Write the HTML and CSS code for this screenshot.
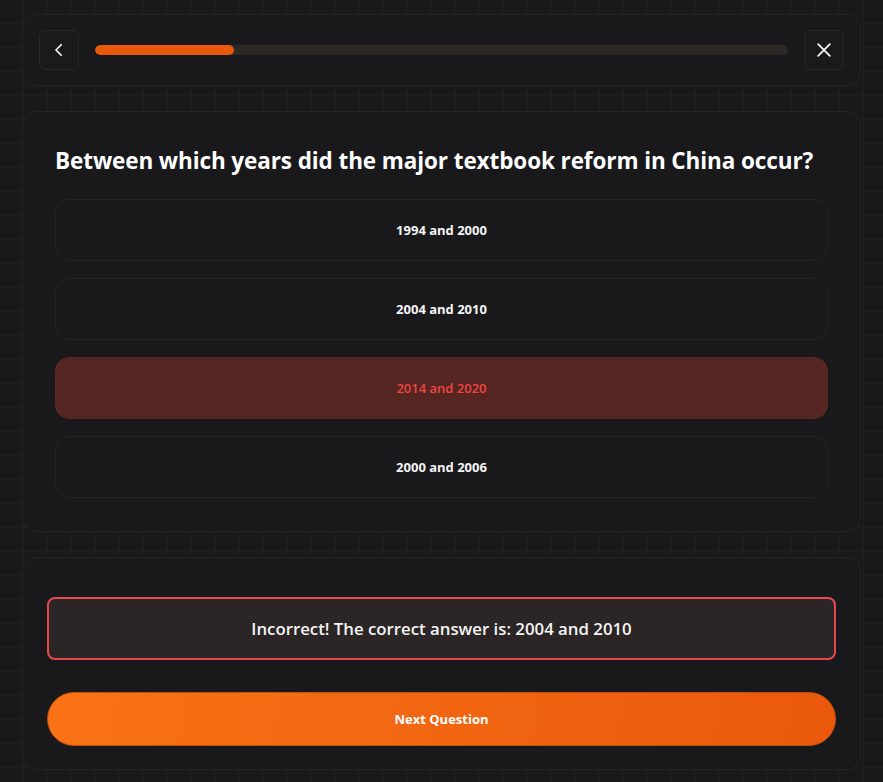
FILE: index.html
```html
<!DOCTYPE html>
<html lang="en">
<head>
<meta charset="utf-8">
<title>Quiz</title>
<link rel="stylesheet" href="styles.css">
</head>
<body>
<main class="page">
  <header class="card topbar">
    <button class="icon-btn" aria-label="Back">
      <svg width="18" height="18" viewBox="0 0 24 24" fill="none" stroke="#ffffff" stroke-width="2.2" stroke-linecap="round" stroke-linejoin="round"><path d="M15 5l-7 7 7 7"/></svg>
    </button>
    <div class="progress"><div class="progress-fill" style="width:20%"></div></div>
    <button class="icon-btn" aria-label="Close">
      <svg width="20" height="20" viewBox="0 0 24 24" fill="none" stroke="#ffffff" stroke-width="2" stroke-linecap="round"><path d="M5 5l14 14M19 5L5 19"/></svg>
    </button>
  </header>

  <section class="card question-card">
    <h1 class="question">Between which years did the major textbook reform in China occur?</h1>
    <div class="options">
      <button class="option">1994 and 2000</button>
      <button class="option">2004 and 2010</button>
      <button class="option option-wrong">2014 and 2020</button>
      <button class="option">2000 and 2006</button>
    </div>
  </section>

  <section class="card feedback-card">
    <div class="feedback">Incorrect! The correct answer is: 2004 and 2010</div>
    <button class="next-btn">Next Question</button>
  </section>
</main>
</body>
</html>
```

FILE: styles.css
```css
* { box-sizing: border-box; }

html, body {
  margin: 0;
  padding: 0;
}

body {
  background-color: #19191b;
  background-image:
    linear-gradient(to right, #1f1f22 1px, transparent 1px),
    linear-gradient(to bottom, #1f1f22 1px, transparent 1px);
  background-size: 24px 24px;
  background-position: -1px -1px;
  font-family: "Open Sans", "Noto Sans", "Liberation Sans", sans-serif;
  color: #ffffff;
  min-height: 782px;
}

.page {
  padding: 14px 22px 12px;
  display: flex;
  flex-direction: column;
  gap: 25px;
}

.card {
  background: #19191b;
  border: 1px solid #232326;
  border-radius: 14px;
}

.topbar {
  display: flex;
  align-items: center;
  gap: 16px;
  padding: 15px 16px;
}

.icon-btn {
  width: 40px;
  height: 40px;
  flex: 0 0 40px;
  display: flex;
  align-items: center;
  justify-content: center;
  background: #1a1a1c;
  border: 1px solid #27272a;
  border-radius: 6px;
  padding: 0;
  cursor: pointer;
}

.progress {
  flex: 1;
  height: 10px;
  background: #2b2826;
  border-radius: 999px;
  overflow: hidden;
}

.progress-fill {
  height: 100%;
  background: #e8590c;
  border-radius: 999px;
}

.question-card {
  padding: 33px 32px 33px;
}

.question {
  margin: 0 0 22px;
  font-size: 22.5px;
  line-height: 32px;
  font-weight: 700;
  letter-spacing: -0.1px;
  color: #ffffff;
}

.options {
  display: flex;
  flex-direction: column;
  gap: 17px;
}

.option {
  height: 62px;
  width: 100%;
  background: #19191b;
  border: 1px solid #232326;
  border-radius: 14px;
  color: #f4f4f5;
  font-family: inherit;
  font-size: 13px;
  font-weight: 700;
  cursor: pointer;
}

.option-wrong {
  background: #552621;
  border-color: #5a2823;
  color: #ef4444;
  font-weight: 600;
}

.feedback-card {
  padding: 39px 24px 23px;
  display: flex;
  flex-direction: column;
  gap: 32px;
}

.feedback {
  height: 63px;
  display: flex;
  align-items: center;
  justify-content: center;
  background: #2b2625;
  border: 2px solid #e5484d;
  border-radius: 8px;
  font-size: 16.8px;
  font-weight: 600;
  color: #f4f4f5;
}

.next-btn {
  height: 54px;
  width: 100%;
  border: 1px solid #c2510f;
  border-radius: 999px;
  background: linear-gradient(100deg, #f97316 0%, #ea580c 100%);
  color: #ffffff;
  font-family: inherit;
  font-size: 13px;
  font-weight: 700;
  cursor: pointer;
}
```
